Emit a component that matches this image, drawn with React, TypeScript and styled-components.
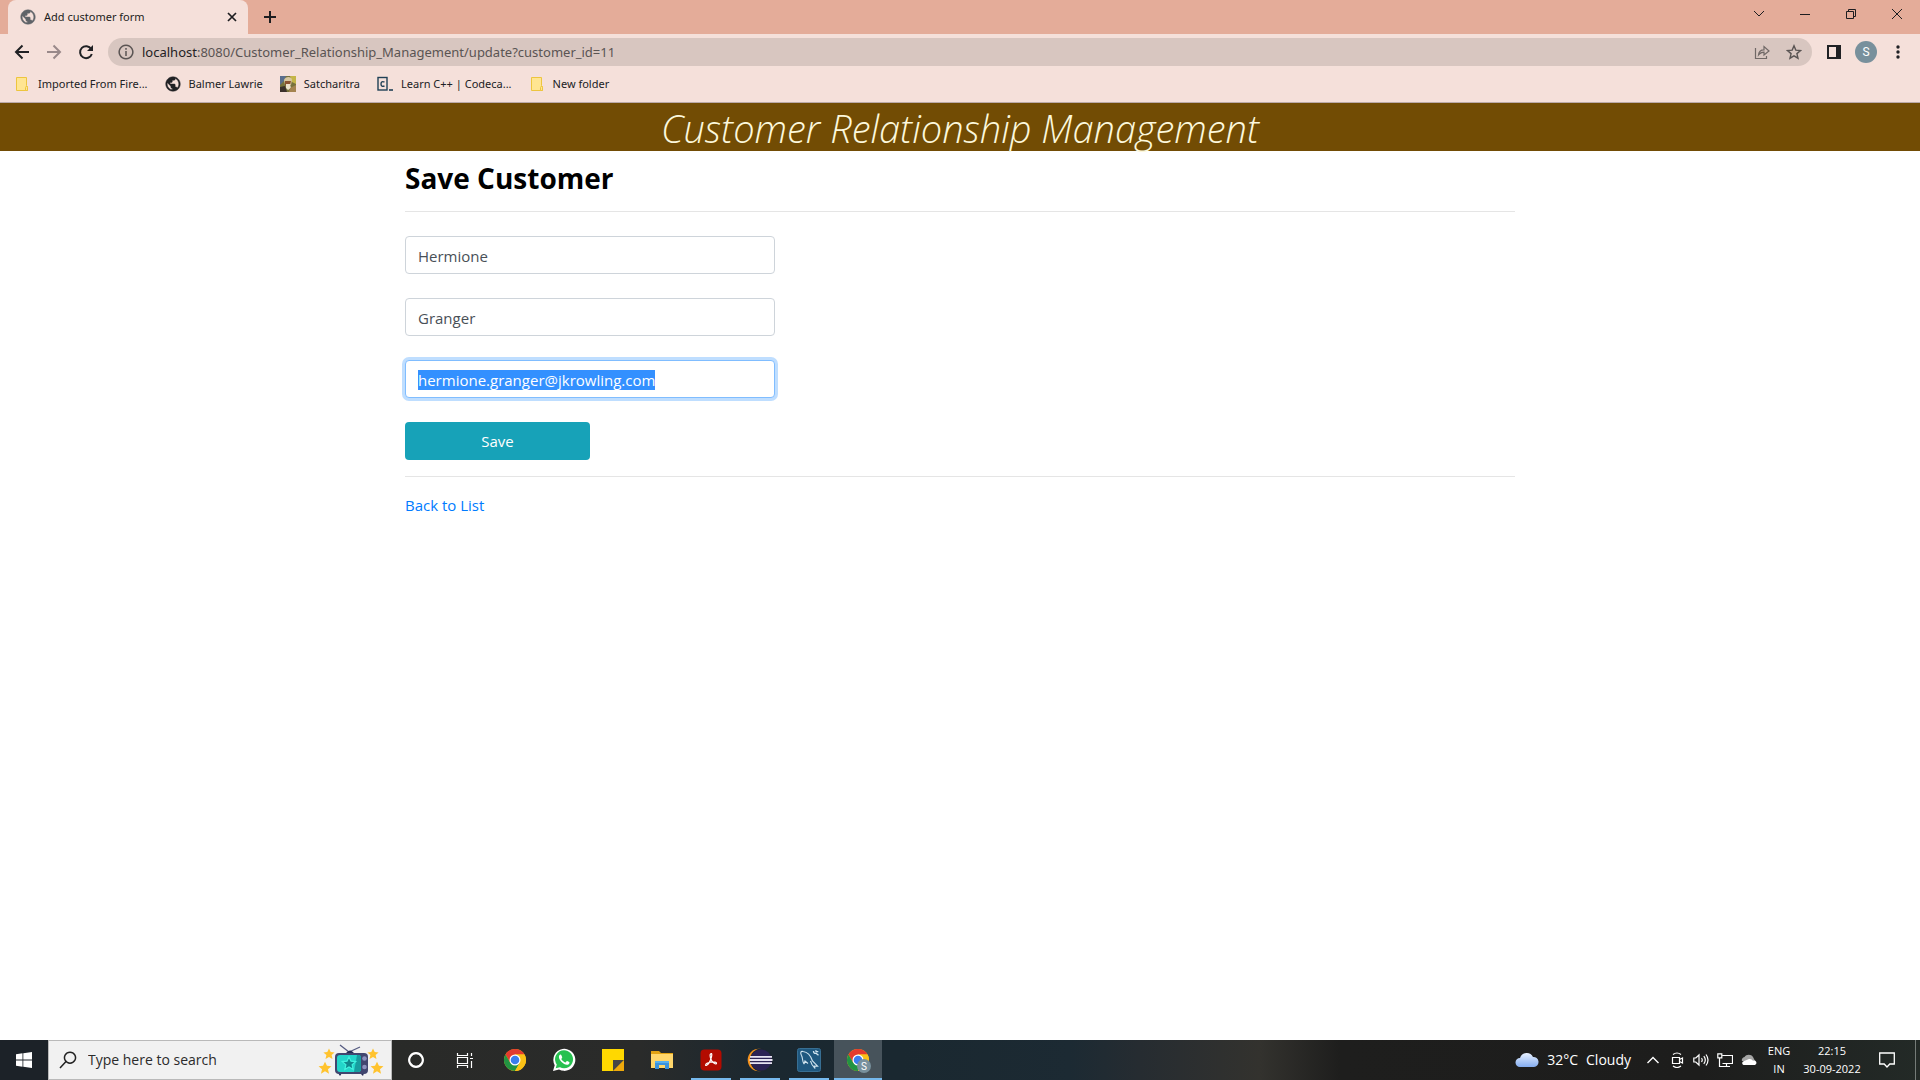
import React, { useEffect, useRef } from "react";
import styled, { createGlobalStyle } from "styled-components";

const GlobalStyle = createGlobalStyle`
  *, *::before, *::after { box-sizing: border-box; }
  body {
    margin: 0;
    background: #fff;
    color: #000;
    font-family: "Open Sans", "Noto Sans", sans-serif;
    font-size: 15px;
    line-height: 24px;
  }
  button { font: inherit; color: inherit; border: 0; background: none; padding: 0; }
  svg { display: block; flex: none; }
`;

const Screen = styled.div`
  display: flex;
  flex-direction: column;
  min-height: 100vh;
`;

/* ---------- browser window ---------- */

const TabStrip = styled.div`
  display: flex;
  align-items: stretch;
  height: 34px;
  padding-left: 8px;
  background: #e4ac99;
  color: #1d1d20;
  font-family: "Noto Sans", "Open Sans", sans-serif;
  font-size: 11px;
`;

const Tab = styled.div`
  display: flex;
  align-items: center;
  width: 240px;
  padding: 0 10px 0 12px;
  gap: 8px;
  border-radius: 8px 8px 0 0;
  background: #f5e0da;
`;

const TabTitle = styled.span`
  flex: 1;
  white-space: nowrap;
`;

const IconButton = styled.button<{ $w?: number; $h?: number }>`
  display: flex;
  align-items: center;
  justify-content: center;
  flex: none;
  width: ${(p) => p.$w ?? 32}px;
  height: ${(p) => p.$h ?? 28}px;
`;

const WindowControls = styled.div`
  display: flex;
  margin-left: auto;
  height: 28px;
`;

const Toolbar = styled.div`
  display: flex;
  align-items: center;
  height: 36px;
  padding: 0 6px;
  background: #f5e0da;
  color: #202124;
`;

const AddressBar = styled.div`
  display: flex;
  align-items: center;
  flex: 1;
  height: 28px;
  margin: 0 6px;
  padding: 0 2px 0 10px;
  gap: 8px;
  border-radius: 14px;
  background: #d8c6c0;
  color: #5a5453;
  font-family: "Noto Sans", "Open Sans", sans-serif;
  font-size: 13px;
`;

const Url = styled.span`
  flex: 1;
  white-space: nowrap;
`;

const Host = styled.span`
  color: #232124;
`;

const AddressActions = styled.div`
  display: flex;
`;

const Avatar = styled.span`
  display: flex;
  align-items: center;
  justify-content: center;
  width: 22px;
  height: 22px;
  border-radius: 50%;
  background: #78909c;
  color: #fff;
  font-family: Roboto, sans-serif;
  font-size: 12px;
`;

const Bookmarks = styled.nav`
  display: flex;
  align-items: center;
  height: 33px;
  padding: 0 14px 4px;
  gap: 17px;
  border-bottom: 1px solid #bbaaa9;
  background: #f5e0da;
  font-family: "Noto Sans", "Open Sans", sans-serif;
  font-size: 11px;
`;

const Bookmark = styled.a`
  display: flex;
  align-items: center;
  gap: 8px;
  color: #202124;
  text-decoration: none;
  white-space: nowrap;
`;

/* ---------- customer page ---------- */

const Page = styled.main`
  flex: 1;
`;

const Banner = styled.header`
  height: 48px;
  background: #724c04;
  color: #fcf8dc;
  font-size: 38px;
  font-style: italic;
  font-weight: 300;
  line-height: 50px;
  text-align: center;
`;

const Container = styled.section`
  width: 100%;
  max-width: 1140px;
  margin: 0 auto;
  padding: 8px 15px;
`;

const Heading = styled.h1`
  margin: 0;
  font-size: 28px;
  font-weight: 700;
  line-height: 38px;
`;

const Rule = styled.hr`
  margin: 14px 0 24px;
  border: 0;
  border-top: 1px solid #e5e5e5;
`;

const FormRule = styled(Rule)`
  margin: 16px 0;
`;

const Form = styled.form`
  display: flex;
  flex-direction: column;
  align-items: flex-start;
  gap: 24px;
`;

const Field = styled.input`
  width: 33.333%;
  height: 38px;
  padding: 8px 12px 6px;
  border: 1px solid #ced4da;
  border-radius: 4px;
  outline: 0;
  color: #495057;
  background: #fff;
  font: inherit;

  &:focus {
    border-color: #80bdff;
    box-shadow: 0 0 0 3px #bfdeff;
  }
  &::selection {
    background: #3390ff;
    color: #fff;
  }
`;

const SaveButton = styled.button`
  width: 16.667%;
  height: 38px;
  border-radius: 4px;
  background: #17a2b8;
  color: #fff;
`;

const BackLink = styled.a`
  color: #007bff;
  text-decoration: none;
`;

/* ---------- taskbar ---------- */

const Taskbar = styled.footer`
  display: flex;
  align-items: stretch;
  height: 40px;
  background: linear-gradient(
    90deg,
    #1c2228 0,
    #1c2228 48px,
    #292a28 392px,
    #2a2b2a 640px,
    #1b2830 760px,
    #1a2830 900px,
    #1c2a33 1070px,
    #262c31 1140px,
    #33322e 1260px,
    #1e1e1d 1340px,
    #1d1d1c 1700px,
    #232a27 1920px
  );
  color: #fff;
`;

const SearchBox = styled.label`
  display: flex;
  align-items: center;
  width: 344px;
  padding: 0 7px 0 10px;
  gap: 11px;
  border: 1px solid #b9b9b9;
  background: #f1f1f1;
`;

const SearchInput = styled.input`
  flex: 1;
  min-width: 0;
  padding: 0;
  border: 0;
  outline: 0;
  background: transparent;
  font: inherit;
  font-size: 14px;
  &::placeholder { color: #2b2b2b; opacity: 1; }
`;

const Apps = styled.div`
  display: flex;
  gap: 1px;
  margin-left: 3px;
`;

const AppButton = styled.button<{ $open?: boolean; $active?: boolean }>`
  display: flex;
  align-items: center;
  justify-content: center;
  width: 48px;
  height: 40px;
  background: ${(p) =>
    p.$active
      ? "linear-gradient(#76b9ed, #76b9ed) bottom / 100% 2px no-repeat, #47535b"
      : p.$open
        ? "linear-gradient(#76b9ed, #76b9ed) bottom / 40px 2px no-repeat"
        : "none"};
`;

const Tray = styled.div`
  display: flex;
  align-items: center;
  margin-left: auto;
`;

const Weather = styled.div`
  display: flex;
  align-items: center;
  gap: 8px;
  margin-right: 10px;
  font-size: 14px;
`;

const TrayText = styled.div<{ $w: number }>`
  width: ${(p) => p.$w}px;
  font-size: 11px;
  line-height: 18px;
  text-align: center;
  white-space: nowrap;
`;

const DesktopEdge = styled.span`
  width: 5px;
  height: 40px;
  margin-left: 8px;
  border-left: 1px solid #757b78;
`;

/* ---------- drawings ---------- */

const Globe = ({ color }: { color: string }) => (
  <svg width="16" height="16" viewBox="1 1 22 22" aria-hidden="true">
    <path
      d="M12 2C6.480 2 2 6.480 2 12s4.480 10 10 10 10-4.480 10-10S17.520 2 12 2zm-1 17.930c-3.950-.49-7-3.850-7-7.930 0-.62.08-1.210.21-1.790L9 15v1c0 1.100.9 2 2 2v1.930zm6.900-2.540c-.26-.81-1-1.390-1.900-1.390h-1v-3c0-.55-.45-1-1-1H8v-2h2c.55 0 1-.45 1-1V7h2c1.100 0 2-.9 2-2v-.41c2.930 1.190 5 4.060 5 7.410 0 2.080-.8 3.970-2.100 5.390z"
      fill={color}
      stroke={color}
      strokeWidth="0.6"
    />
  </svg>
);

const FolderMark = () => (
  <svg width="16" height="16" viewBox="0 0 16 16" aria-hidden="true">
    <path d="M2.500 1.500h10v8l1 1v4h-11z" fill="#ffe592" stroke="#edc53e" />
    <path d="M11.500 14.500v-3l1-1.500 1 1.500v3z" fill="#ffe592" stroke="#edc53e" />
  </svg>
);

const Portrait = () => (
  <svg width="16" height="16" viewBox="0 0 16 16" aria-hidden="true">
    <path d="M0 0h16v16H0z" fill="#77713c" />
    <path d="M0 0h6l-2 5-4 4z" fill="#5a6d8c" />
    <path d="M10 0h6v8l-4-2z" fill="#c4b548" />
    <path d="M4 4c1-4 8-4 8 0l-1 5H5z" fill="#d7c69d" />
    <path d="M5 5h6l-1 4-2 2-3-2z" fill="#8b5232" />
    <path d="M6 8h4l1 4-3 2-2-2z" fill="#ece1cc" />
    <path d="M0 11l5-1 2 6H0z" fill="#3b302b" />
    <path d="M10 12l6-3v7H9z" fill="#a4834f" />
  </svg>
);

const Codecademy = () => (
  <svg width="16" height="16" viewBox="0 0 16 16" aria-hidden="true" fill="none" stroke="#204056">
    <rect x="1" y="1.500" width="9" height="12.500" strokeWidth="1.400" />
    <path d="M7.500 6.200C5.500 5 4 5.800 4 8s1.500 3 3.500 1.800" strokeWidth="1.400" />
    <path d="M12 14h4" strokeWidth="1.600" />
  </svg>
);

const Line = ({ d, size = 16, width = 1, color = "currentColor" }: { d: string; size?: number; width?: number; color?: string }) => (
  <svg width={size} height={size} viewBox={`0 0 ${size} ${size}`} fill="none" stroke={color} strokeWidth={width} aria-hidden="true">
    <path d={d} />
  </svg>
);

const Chrome = ({ badge }: { badge?: boolean }) => (
  <svg width="26" height="26" viewBox="0 0 26 26" aria-hidden="true">
    <circle cx="13" cy="13" r="11" fill="#fbc116" />
    <path d="M3.470 7.500A11 11 0 0 1 22.530 7.500H13L8.240 15.750Z" fill="#e33b2e" />
    <path d="M3.470 7.500A11 11 0 0 0 13 24L17.760 15.750 8.240 15.750Z" fill="#229342" />
    <path d="M22.530 7.500A11 11 0 0 1 13 24L17.760 15.750 13 7.500Z" fill="#fbc116" />
    <circle cx="13" cy="13" r="5.500" fill="#fff" />
    <circle cx="13" cy="13" r="4.300" fill="#3b7ded" />
    {badge && (
      <>
        <circle cx="19" cy="19" r="7" fill="#78909c" />
        <text x="19" y="22.500" fill="#fff" fontFamily="Roboto, sans-serif" fontSize="10" textAnchor="middle">S</text>
      </>
    )}
  </svg>
);

const WhatsApp = () => (
  <svg width="24" height="24" viewBox="0 0 24 24" aria-hidden="true">
    <path d="M1 23l1.700-5.800A11 11 0 1 1 7 21.500Z" fill="#fff" />
    <path d="M3.700 20.300l1.100-3.700A9 9 0 1 1 8 19.300Z" fill="#27c150" />
    <path d="M8.600 6.500c-.9 0-1.700 1.200-1.700 2.500 0 3 4.600 7.800 7.900 7.800 1.500 0 2.700-1 2.700-2.100 0-.5-.4-.7-2.400-1.600-.7-.3-1 1.400-1.800 1.300-1-.1-3.800-2.600-3.900-3.500 0-.5 1-1.100.8-1.700-.7-1.900-.9-2.700-1.600-2.700Z" fill="#fff" />
  </svg>
);

const Notes = () => (
  <svg width="22" height="22" viewBox="0 0 22 22" aria-hidden="true">
    <path d="M0 0h22v11L11 22H0z" fill="#ffd800" />
    <path d="M11 11h11L11 22z" fill="#464646" />
    <path d="M22 11v11H11z" fill="#efa90c" />
  </svg>
);

const Explorer = () => (
  <svg width="22" height="20" viewBox="0 0 22 20" aria-hidden="true">
    <path d="M0 1h8l2 2h12v15H0z" fill="#e2a213" />
    <path d="M0 4h22v14H0z" fill="#ffd66b" />
    <path d="M4 18v-6l2-1h10l2 1v7h-4v-4H8v4H4z" fill="#3b93dd" />
    <path d="M4 11h14v2H4z" fill="#56b0ef" />
  </svg>
);

const Acrobat = () => (
  <svg width="22" height="22" viewBox="0 0 22 22" aria-hidden="true">
    <rect x="0.500" y="0.500" width="21" height="21" rx="4" fill="#b30b00" />
    <path d="M10.500 5c1.500-1.200 1.600.8.8 3.500-.9 3.200-3 7-4.600 7.800-1.500.7-1.500-1 .3-2 2.200-1.200 6-1.700 8.200-1.200 2 .5 1.600 2.300-.2 1.700-2.200-.8-4.900-4.800-4.900-8 0-.7.1-1.500.4-1.800Z" fill="none" stroke="#fff" strokeWidth="1.200" />
  </svg>
);

const Eclipse = () => (
  <svg width="26" height="24" viewBox="0 0 26 24" aria-hidden="true">
    <circle cx="12" cy="12" r="11.300" fill="#f7941e" />
    <circle cx="14.500" cy="12" r="11.500" fill="#1d2730" />
    <circle cx="14" cy="12" r="10.500" fill="#2c2255" />
    <path d="M3 8.800h22M2.500 12h23M3 15.200h22" stroke="#e7e3f2" strokeWidth="1.800" />
  </svg>
);

const MySql = () => (
  <svg width="24" height="24" viewBox="0 0 24 24" aria-hidden="true" fill="none" stroke="#cfe3ee">
    <rect x="0.500" y="0.500" width="23" height="23" rx="2" fill="#1f587f" stroke="#386f93" />
    <path d="M7 16C5 13 6 10 4.500 7.500 3.200 5 3.500 3 6 3.500c5 .5 8 5 9.500 9.500l5 5.200-3-.2.500 2.500-3-4-1.500-3.500M7 16l1-3 3 2.500" strokeWidth="1.100" />
    <path d="M16.500 3c0 2 1 2.600 2.500 2.300l2.500 2M18.500 2.300l.8 1.200 2 .1" strokeWidth="1.400" />
  </svg>
);

const starPath = "M0-5.500 1.700-1.900 5.600-1.600 2.600 1 3.500 5 0 2.900-3.500 5-2.600 1-5.600-1.600-1.700-1.900Z";

const Television = () => (
  <svg width="66" height="34" viewBox="0 0 66 34" aria-hidden="true">
    {[[11, 11, 1], [7, 25, 1.150], [55, 11, 1], [59, 25, 1.150]].map(([x, y, s]) => (
      <path key={`${x}-${y}`} d={starPath} transform={`translate(${x} ${y}) scale(${s})`} fill="#ffc32e" />
    ))}
    <path d="M22 2l9 7 11-5" fill="none" stroke="#565c82" strokeWidth="1.300" />
    <path d="M28 10q4-5 8 0zM20 30h4l-2 3zM42 30h4l-1 3z" fill="#252b54" />
    <rect x="17" y="10" width="33" height="21" rx="4" fill="#41466f" />
    <rect x="19" y="12" width="24" height="17" rx="3" fill="#23d5ca" />
    <path d="M39 12h2q2 0 2 3v11q0 3-3 3h-4z" fill="#179d9f" />
    <path d={starPath} transform="translate(31 20.500) scale(1.200)" fill="#10898f" stroke="#41f2df" />
    <circle cx="46.500" cy="15.500" r="2.300" fill="#8c91be" />
    <circle cx="46.500" cy="24" r="2.300" fill="#8c91be" />
  </svg>
);

const WeatherCloud = () => (
  <svg width="24" height="16" viewBox="0 0 24 16" aria-hidden="true">
    <defs>
      <linearGradient id="cloud" x2="0" y2="1">
        <stop stopColor="#e8f1ff" />
        <stop offset="1" stopColor="#84adf0" />
      </linearGradient>
    </defs>
    <path d="M5 15a4.500 4.500 0 0 1 0-9 7 7 0 0 1 13-1A5 5 0 0 1 19 15Z" fill="url(#cloud)" />
  </svg>
);

const OneDrive = () => (
  <svg width="16" height="12" viewBox="0 0 16 12" aria-hidden="true">
    <path d="M1 7a3 3 0 0 1 2.500-4A5 5 0 0 1 12 3l2 4z" fill="#a5a5a5" />
    <path d="M2.500 11A2.300 2.300 0 0 1 2 7.500L8 5a4 4 0 0 1 4 1.700A2.300 2.300 0 0 1 14 11Z" fill="#fff" />
  </svg>
);

export default function App() {
  const email = useRef<HTMLInputElement>(null);

  useEffect(() => {
    email.current?.focus();
    email.current?.select();
  }, []);

  return (
    <Screen>
      <GlobalStyle />
      <TabStrip>
        <Tab>
          <Globe color="#5f6368" />
          <TabTitle>Add customer form</TabTitle>
          <IconButton $w={12} aria-label="Close tab">
            <Line size={10} width={1.7} d="M1 1l8 8M9 1 1 9" />
          </IconButton>
        </Tab>
        <IconButton $w={44} $h={34} aria-label="New tab">
          <Line size={14} width={2} d="M7 1v12M1 7h12" />
        </IconButton>
        <WindowControls>
          <IconButton $w={46} aria-label="Search tabs"><Line size={12} d="M1 3l5 5 5-5" /></IconButton>
          <IconButton $w={46} aria-label="Minimize"><Line size={10} d="M0 5.500h10" /></IconButton>
          <IconButton $w={46} aria-label="Restore"><Line size={10} d="M.5 2.500h7v7h-7zM2.500 2.500v-2h7v7h-2" /></IconButton>
          <IconButton $w={46} aria-label="Close"><Line size={10} d="M0 0l10 10M10 0 0 10" /></IconButton>
        </WindowControls>
      </TabStrip>

      <Toolbar>
        <IconButton aria-label="Back"><Line width={2} d="M15 8H2.500M8.500 1.500 2 8l6.500 6.500" /></IconButton>
        <IconButton aria-label="Forward"><Line width={2} color="#99898a" d="M1 8h12.500M7.500 1.500 14 8l-6.500 6.500" /></IconButton>
        <IconButton aria-label="Reload">
          <svg width="16" height="16" viewBox="0 0 16 16" aria-hidden="true">
            <path d="M13.200 5A6 6 0 1 0 13.800 10" fill="none" stroke="currentColor" strokeWidth="2" />
            <path d="M15 1v6H9z" fill="currentColor" />
          </svg>
        </IconButton>
        <AddressBar>
          <Line width={1.5} d="M8 1.200a6.800 6.800 0 1 0 .01 0ZM8 7v5M8 4v1.700" />
          <Url><Host>localhost</Host>:8080/Customer_Relationship_Management/update?customer_id=11</Url>
          <AddressActions>
            <IconButton aria-label="Share">
              <Line d="M1.500 4v10.500h11V12M4.500 11c.3-3.600 2.200-5.200 5.500-5.200V2.500l5 4.500-5 4V8.200C7.500 8.200 6 9 4.500 11Z" width={1.2} color="#706866" />
            </IconButton>
            <IconButton aria-label="Bookmark this page">
              <Line d="M8 1.800l1.800 4.300 4.700.4-3.600 3.100 1.100 4.600L8 11.800l-4 2.400 1.100-4.600L1.500 6.500l4.700-.4Z" width={1.4} />
            </IconButton>
          </AddressActions>
        </AddressBar>
        <IconButton aria-label="Side panel">
          <svg width="14" height="14" viewBox="0 0 14 14" aria-hidden="true">
            <path d="M0 0h14v14H0zM2 2v10h7V2z" fill="currentColor" fillRule="evenodd" />
          </svg>
        </IconButton>
        <IconButton aria-label="Profile"><Avatar>S</Avatar></IconButton>
        <IconButton aria-label="Menu">
          <svg width="4" height="14" viewBox="0 0 4 14" fill="currentColor" aria-hidden="true">
            <circle cx="2" cy="2" r="1.700" /><circle cx="2" cy="7" r="1.700" /><circle cx="2" cy="12" r="1.700" />
          </svg>
        </IconButton>
      </Toolbar>

      <Bookmarks aria-label="Bookmarks">
        <Bookmark href="#"><FolderMark />Imported From Fire...</Bookmark>
        <Bookmark href="#"><Globe color="#202124" />Balmer Lawrie</Bookmark>
        <Bookmark href="#"><Portrait />Satcharitra</Bookmark>
        <Bookmark href="#"><Codecademy />Learn C++ | Codeca...</Bookmark>
        <Bookmark href="#"><FolderMark />New folder</Bookmark>
      </Bookmarks>

      <Page>
        <Banner>Customer Relationship Management</Banner>
        <Container>
          <Heading>Save Customer</Heading>
          <Rule />
          <Form onSubmit={(e) => e.preventDefault()}>
            <Field aria-label="First name" defaultValue="Hermione" />
            <Field aria-label="Last name" defaultValue="Granger" />
            <Field aria-label="Email" defaultValue="hermione.granger@jkrowling.com" ref={email} />
            <SaveButton type="submit">Save</SaveButton>
          </Form>
          <FormRule />
          <BackLink href="#">Back to List</BackLink>
        </Container>
      </Page>

      <Taskbar>
        <AppButton aria-label="Start">
          <svg width="16" height="16" viewBox="0 0 16 16" fill="#fff" aria-hidden="true">
            <path d="M0 2.200 6.500 1.300v6.200H0zM7.300 1.200 16 0v7.500H7.300zM0 8.400h6.500v6.300L0 13.800zM7.300 8.400H16V16l-8.700-1.200z" />
          </svg>
        </AppButton>
        <SearchBox>
          <Line size={18} width={1.5} color="#222" d="M11 1.200a5.500 5.500 0 1 0 .01 0ZM7 10.500l-6 6.500" />
          <SearchInput aria-label="Search" placeholder="Type here to search" />
          <Television />
        </SearchBox>
        <AppButton aria-label="Cortana">
          <Line width={2.2} d="M8 1.200a6.800 6.800 0 1 0 .01 0Z" />
        </AppButton>
        <AppButton aria-label="Task view">
          <Line size={17} width={1.2} d="M1.500 1v2.500h10V1M1.500 16v-2.500h10V16M1.500 5.500h10v6h-10zM15.500 1v3M15.500 9v7M14 6.500h3" />
        </AppButton>
        <Apps>
          <AppButton aria-label="Chrome"><Chrome /></AppButton>
          <AppButton aria-label="WhatsApp"><WhatsApp /></AppButton>
          <AppButton aria-label="Sticky Notes"><Notes /></AppButton>
          <AppButton aria-label="File Explorer"><Explorer /></AppButton>
          <AppButton $open aria-label="Acrobat"><Acrobat /></AppButton>
          <AppButton $open aria-label="Eclipse"><Eclipse /></AppButton>
          <AppButton $open aria-label="MySQL Workbench"><MySql /></AppButton>
          <AppButton $active aria-label="Chrome, Add customer form"><Chrome badge /></AppButton>
        </Apps>
        <Tray>
          <Weather><WeatherCloud /><span>32°C</span><span>Cloudy</span></Weather>
          <IconButton $w={24} aria-label="Show hidden icons"><Line size={14} width={1.4} d="M1.500 10 7 4.500 12.500 10" /></IconButton>
          <IconButton $w={24} aria-label="Meet now">
            <Line width={1.2} d="M3.500 5.500h7v6h-7zM10.500 7.500l3-1.500v5l-3-1.500M4 2.500Q8-.5 12 2.500M4 14Q8 17 12 14" />
          </IconButton>
          <IconButton $w={24} aria-label="Volume">
            <Line width={1.2} d="M.8 6h2L6 3v10L2.800 10H.8ZM8.500 6q1.500 2 0 4M10.800 4.200q3 3.800 0 7.600M13 2.500q4 5.500 0 11" />
          </IconButton>
          <IconButton $w={24} aria-label="Network">
            <Line width={1.2} d="M5.500 3.500h10v8h-10M9.500 11.500v3M6 14.500h7M.8 1.800h4v4h-4zM2.500 6v8.500H6" />
          </IconButton>
          <IconButton $w={24} aria-label="OneDrive"><OneDrive /></IconButton>
          <TrayText $w={36}>ENG<br />IN</TrayText>
          <TrayText $w={70}>22:15<br />30-09-2022</TrayText>
          <IconButton $w={40} aria-label="Notifications">
            <Line width={1.3} d="M.7 1h14.600v11h-4.500L8 15l-2.800-3H.7Z" />
          </IconButton>
          <DesktopEdge />
        </Tray>
      </Taskbar>
    </Screen>
  );
}
